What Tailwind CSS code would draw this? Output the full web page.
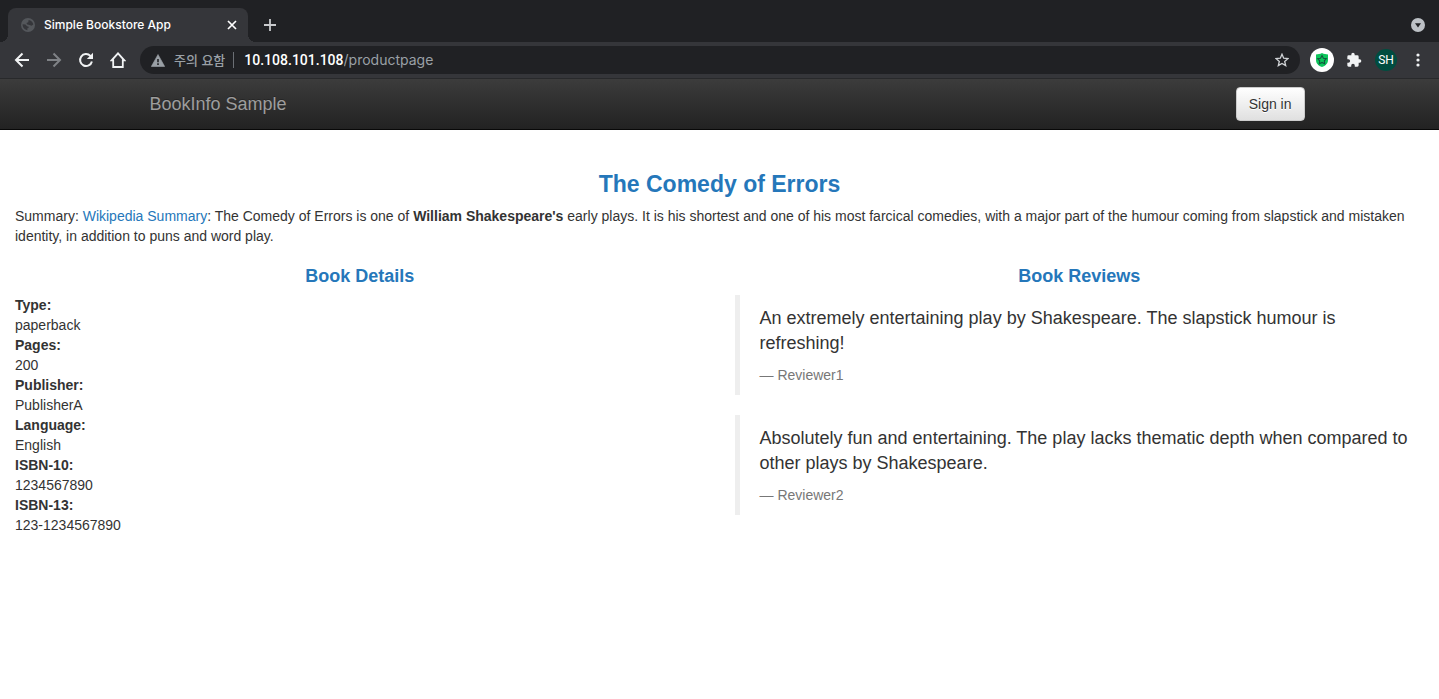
<!DOCTYPE html>
<html lang="en">
<head>
<meta charset="utf-8">
<meta name="viewport" content="width=device-width, initial-scale=1">
<title>Simple Bookstore App</title>
<script src="https://cdn.jsdelivr.net/npm/@tailwindcss/browser@4"></script>
</head>
<body class="bg-white font-['Liberation_Sans',Arial,sans-serif] text-sm leading-5 text-[#333]">

<!-- Browser window -->
<div class="font-[Inter,'Noto_Sans_CJK_KR',sans-serif]">
  <div class="flex h-[42px] items-center bg-[#202124] pt-2 pr-3">
    <div class="size-2 self-end bg-[radial-gradient(circle_at_0_0,#202124_8px,#35363a_8px)]"></div>
    <div class="flex h-full w-[240px] items-center rounded-t-lg bg-[#35363a] pr-2 pl-[13px] text-white">
      <svg class="size-[14px] shrink-0" viewBox="0 0 14 14"><circle cx="7" cy="7" r="7" fill="#54575b"/><path d="M1.600 6.300 4.500 6.600 6 8.200l1.800.5-.4 1.300-1.200.6.300 1.600C3.600 11.900 1.500 9.600 1.600 6.300zM7.600 2c2.500.3 4.300 2.100 4.700 4.500L10.500 7.800 8.600 7 6.300 6.400 5.400 5l1.900-.8z" fill="#35363a"/></svg>
      <span class="ml-[9px] flex-1 text-xs font-medium">Simple Bookstore App</span>
      <button class="grid size-4 place-items-center" aria-label="Close tab"><svg class="size-[10px]" viewBox="0 0 10 10" stroke="#fff" stroke-width="1.700"><path d="m1 1 8 8M9 1 1 9"/></svg></button>
    </div>
    <div class="size-2 self-end bg-[radial-gradient(circle_at_100%_0,#202124_8px,#35363a_8px)]"></div>
    <button class="ml-2 grid size-3 place-items-center" aria-label="New tab"><svg class="size-3" viewBox="0 0 12 12" stroke="#c8cacd" stroke-width="1.800"><path d="M6 0v12M0 6h12"/></svg></button>
    <button class="ml-auto pr-[2px]" aria-label="Search tabs"><svg class="size-[14px]" viewBox="0 0 14 14"><circle cx="7" cy="7" r="7" fill="#bdc1c6"/><path d="M4 5.200h6L7 9.500z" fill="#202124"/></svg></button>
  </div>
  <div class="flex h-9 items-center bg-[#35363a] pr-3 pl-[14px] text-white">
    <div class="flex gap-4">
      <button aria-label="Back"><svg class="size-4" viewBox="0 0 16 16" fill="none" stroke="#f1f3f4" stroke-width="2"><path d="M15 8H2M8.500 1.500 2 8l6.500 6.500"/></svg></button>
      <button aria-label="Forward"><svg class="size-4" viewBox="0 0 16 16" fill="none" stroke="#7f8286" stroke-width="2"><path d="M1 8h13M7.500 1.500 14 8l-6.500 6.500"/></svg></button>
      <button aria-label="Reload"><svg class="size-4" viewBox="0 0 16 16" fill="none" stroke="#f1f3f4" stroke-width="2"><path d="M13.900 9.500A6 6 0 1 1 12.400 3.900L14 5.500"/><path d="M15 .8V7H8.800z" fill="#f1f3f4" stroke="none"/></svg></button>
      <button aria-label="Home"><svg class="size-4" viewBox="0 0 16 16" fill="none" stroke="#f1f3f4" stroke-width="1.800"><path d="M1.700 8.300H3.200V15h9.600V8.300h1.500L8 1.300z"/></svg></button>
    </div>
    <div class="ml-[14px] flex h-7 flex-1 items-center rounded-full bg-[#202124] px-[11px]">
      <svg class="h-[13px] w-[14px]" viewBox="0 0 14 13"><path d="M7 .5 13.700 12.500H.3z" fill="#9aa0a6" stroke="#9aa0a6" stroke-width=".6" stroke-linejoin="round"/><path d="M6.200 5h1.600v3.200H6.200zM6.200 9.300h1.600v1.600H6.200z" fill="#202124"/></svg>
      <span class="ml-[9px] text-[13px] font-medium text-[#9aa0a6]">주의 요함</span>
      <span class="mr-[10px] ml-2 h-4 w-px bg-[#6b6f74]"></span>
      <label for="url" class="font-['Roboto',sans-serif] text-sm font-medium text-white">10.108.101.108</label>
      <input id="url" type="text" value="/productpage" class="min-w-0 flex-1 bg-transparent text-sm text-[#9aa0a6] outline-none">
      <button aria-label="Bookmark"><svg class="size-[14px]" viewBox="0 0 14 14" fill="none" stroke="#d0d3d6" stroke-width="1.300"><path d="m7 1.200 1.700 4 4.300.4-3.300 2.800 1 4.200L7 10.400l-3.700 2.200 1-4.200L1 5.600l4.300-.4z"/></svg></button>
    </div>
    <div class="flex items-center">
      <button class="ml-[10px] grid size-6 place-items-center rounded-full bg-white" aria-label="Extension"><svg class="size-[14px]" viewBox="0 0 14 14"><path d="M7 0c2 1 4 1.400 6 1.400V7c0 3.500-2.500 5.800-6 7-3.500-1.200-6-3.500-6-7V1.400C3 1.400 5 1 7 0z" fill="#0cc65b"/><path d="m7 2.600 1.400 2.600 2.900.5-2 2.100.4 2.900L7 9.400l-2.700 1.300.4-2.900-2-2.100 2.900-.5z" fill="none" stroke="#14553f" stroke-width="1.100"/></svg></button>
      <button class="ml-3" aria-label="Extensions"><svg class="size-4" viewBox="0 0 24 24" fill="#f1f3f4"><path d="M20.500 11H19V7a2 2 0 0 0-2-2h-4V3.500a2.500 2.500 0 0 0-5 0V5H4a2 2 0 0 0-2 2v3.800h1.500a2.700 2.700 0 0 1 0 5.400H2V20c0 1.100.9 2 2 2h3.800v-1.500a2.700 2.700 0 0 1 5.400 0V22H17a2 2 0 0 0 2-2v-4h1.500a2.500 2.500 0 0 0 0-5z"/></svg></button>
      <button class="ml-[13px] size-[22px] rounded-full bg-[#004d40] font-['Roboto',sans-serif] text-xs text-white">SH</button>
      <button class="ml-[13px] pr-[7px] pl-[6px]" aria-label="Menu"><svg class="h-[14px] w-1" viewBox="0 0 4 14" fill="#f1f3f4"><circle cx="2" cy="2" r="1.600"/><circle cx="2" cy="7" r="1.600"/><circle cx="2" cy="12" r="1.600"/></svg></button>
    </div>
  </div>
  <div class="h-px bg-[#28292b]"></div>
</div>

<!-- Site header -->
<nav class="border-b border-[#080808] bg-linear-to-b from-[#3c3c3c] to-[#222]">
  <div class="mx-auto flex h-[50px] max-w-[1170px] items-center justify-between pl-[15px]">
    <a href="#" class="text-lg leading-5 text-[#9d9d9d] [text-shadow:0_-1px_0_rgba(0,0,0,.25)]">BookInfo Sample</a>
    <button class="rounded border border-[#ccc] bg-linear-to-b from-white to-[#e0e0e0] px-3 py-[6px] text-[#333] [text-shadow:0_1px_0_#fff]">Sign in</button>
  </div>
</nav>

<main class="px-[15px] pt-10">
  <h3 class="text-center text-[23px] leading-7 font-bold text-[#2577ba]">The Comedy of Errors</h3>
  <p class="mt-2">Summary: <a href="#" class="text-[#2577ba]">Wikipedia Summary</a>: The Comedy of Errors is one of <b>William Shakespeare's</b> early plays. It is his shortest and one of his most farcical comedies, with a major part of the humour coming from slapstick and mistaken identity, in addition to puns and word play.</p>
  <div class="mt-5 grid grid-cols-2 gap-[30px]">
    <section>
      <h4 class="text-center text-lg leading-5 font-bold text-[#2577ba]">Book Details</h4>
      <dl class="mt-[9px]">
        <dt class="font-bold">Type:</dt><dd>paperback</dd>
        <dt class="font-bold">Pages:</dt><dd>200</dd>
        <dt class="font-bold">Publisher:</dt><dd>PublisherA</dd>
        <dt class="font-bold">Language:</dt><dd>English</dd>
        <dt class="font-bold">ISBN-10:</dt><dd>1234567890</dd>
        <dt class="font-bold">ISBN-13:</dt><dd>123-1234567890</dd>
      </dl>
    </section>
    <section>
      <h4 class="text-center text-lg leading-5 font-bold text-[#2577ba]">Book Reviews</h4>
      <blockquote class="mt-[9px] mb-5 border-l-5 border-[#eee] pt-[11px] pr-2 pb-[10px] pl-5">
        <p class="mb-[9px] text-lg leading-[25px]">An extremely entertaining play by Shakespeare. The slapstick humour is refreshing!</p>
        <footer class="text-[#777]">— Reviewer1</footer>
      </blockquote>
      <blockquote class="mb-5 border-l-5 border-[#eee] pt-[11px] pr-2 pb-[10px] pl-5">
        <p class="mb-[9px] text-lg leading-[25px]">Absolutely fun and entertaining. The play lacks thematic depth when compared to other plays by Shakespeare.</p>
        <footer class="text-[#777]">— Reviewer2</footer>
      </blockquote>
    </section>
  </div>
</main>
</body>
</html>
